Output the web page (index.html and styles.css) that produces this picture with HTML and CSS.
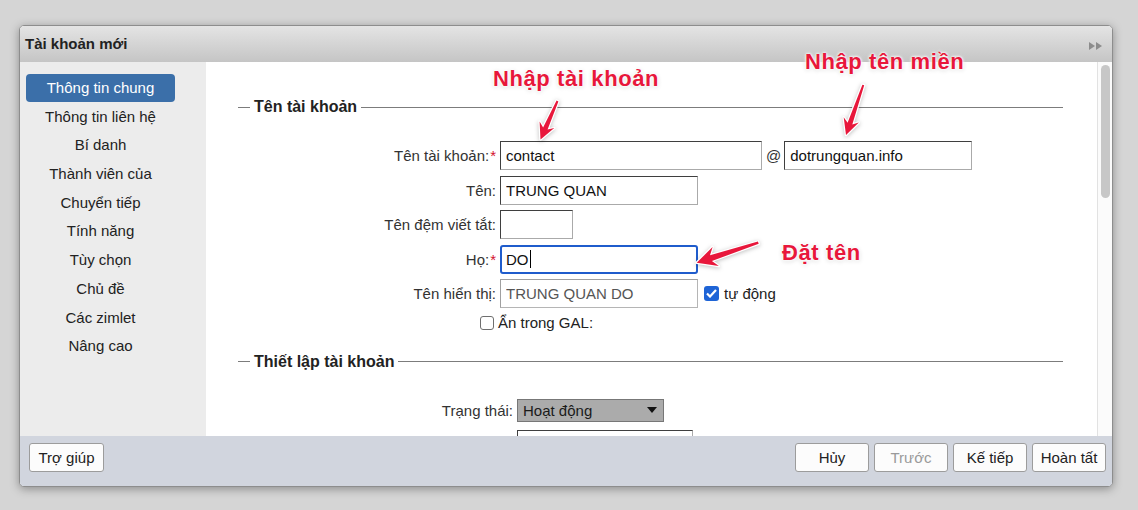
FILE: index.html
```html
<!DOCTYPE html>
<html lang="vi">
<head>
    <meta charset="UTF-8">
    <meta name="viewport" content="width=device-width, initial-scale=1.0">
    <title>Tài khoản mới</title>
    <link rel="stylesheet" href="styles.css">
</head>
<body>

    <div class="dialog">
        <div class="titlebar">
            <span class="title">Tài khoản mới</span>
            <svg class="expand" width="13" height="8" viewBox="0 0 13 8"><path d="M0 0L6 4L0 8Z M7 0L13 4L7 8Z" fill="#8c8c8c"/></svg>
        </div>

        <div class="body">
            <ul class="tabs">
                <li class="active">Thông tin chung</li>
                <li>Thông tin liên hệ</li>
                <li>Bí danh</li>
                <li>Thành viên của</li>
                <li>Chuyển tiếp</li>
                <li>Tính năng</li>
                <li>Tùy chọn</li>
                <li>Chủ đề</li>
                <li>Các zimlet</li>
                <li>Nâng cao</li>
            </ul>

            <div class="content">
                <!-- Tên tài khoản -->
                <div class="section">
                    <div class="section-head"><span>Tên tài khoản</span></div>
                    <div class="form form-name">
                        <label>Tên tài khoản:<em>*</em></label>
                        <div class="field">
                            <input class="w-account" type="text" value="contact">
                            <span class="at">@</span>
                            <input class="w-domain" type="text" value="dotrungquan.info">
                        </div>

                        <label>Tên:</label>
                        <div class="field"><input class="w-name" type="text" value="TRUNG QUAN"></div>

                        <label>Tên đệm viết tắt:</label>
                        <div class="field"><input class="w-initial" type="text" value=""></div>

                        <label>Họ:<em>*</em></label>
                        <div class="field"><div class="fake-input focused">DO<span class="caret"></span></div></div>

                        <label>Tên hiển thị:</label>
                        <div class="field">
                            <input class="w-name auto" type="text" value="TRUNG QUAN DO">
                            <span class="check on"><svg width="11" height="9" viewBox="0 0 11 9"><path d="M1 4.5L4 7.5L10 1" fill="none" stroke="#fff" stroke-width="2.2"/></svg></span>
                            <span class="check-text">tự động</span>
                        </div>

                        <label><span class="check"></span></label>
                        <div class="field gal">Ẩn trong GAL:</div>
                    </div>
                </div>

                <!-- Thiết lập tài khoản -->
                <div class="section second">
                    <div class="section-head"><span>Thiết lập tài khoản</span></div>
                    <div class="form form-setup">
                        <label>Trạng thái:</label>
                        <div class="field">
                            <div class="select">
                                <span>Hoạt động</span>
                                <svg width="10" height="6" viewBox="0 0 10 6"><path d="M0 0H10L5 6Z" fill="#111"/></svg>
                            </div>
                        </div>

                        <label></label>
                        <div class="field">
                            <input class="w-cos" type="text" value="">
                            <span class="check on"></span>
                        </div>
                    </div>
                </div>
            </div>

            <div class="scrollbar"><div class="thumb"></div></div>
        </div>

        <div class="footer">
            <button class="btn wide">Trợ giúp</button>
            <div class="btn-group">
                <button class="btn">Hủy</button>
                <button class="btn disabled">Trước</button>
                <button class="btn">Kế tiếp</button>
                <button class="btn">Hoàn tất</button>
            </div>
        </div>
    </div>

    <!-- Ghi chú chú thích -->
    <div class="notes">
        <svg class="arrows" width="1138" height="510" viewBox="0 0 1138 510">
            <path d="M558.4 101.4L547.6 129.5L554.3 128.1L540.5 139.5L539.6 121.6L543.1 127.5L556.6 100.6Z"/>
            <path d="M864.2 85.3L852.3 124.5L858.8 122.5L846 135L843.7 117.3L847.6 122.8L862.4 84.7Z"/>
            <path d="M758.7 243.8L711.9 260.9L718.8 266L696.7 262.7L712.6 247L710 255.2L757.9 241.6Z"/>
        </svg>
        <div class="note note-account">Nhập tài khoản</div>
        <div class="note note-domain">Nhập tên miền</div>
        <div class="note note-name">Đặt tên</div>
    </div>

</body>
</html>
```

FILE: styles.css
```css
* {
    box-sizing: border-box;
}

body {
    margin: 0;
    padding: 25px 0 0 19px;
    height: 510px;
    overflow: hidden;
    position: relative;
    background-color: #d5d5d5;
    font-family: "Liberation Sans", Arial, sans-serif;
    color: #222;
}

.dialog {
    width: 1094px;
    height: 462px;
    display: flex;
    flex-direction: column;
    border: 1px solid #8d8d8d;
    border-radius: 5px;
    overflow: hidden;
    background-color: #fff;
    box-shadow: 0 2px 10px rgba(0, 0, 0, 0.35);
}

.titlebar {
    flex: none;
    height: 36px;
    display: flex;
    align-items: center;
    justify-content: space-between;
    padding: 0 10px 2px 5px;
    background: linear-gradient(#e4e4e4, #c5c5c5);
}

.title {
    font-size: 15px;
    font-weight: bold;
    color: #222;
}

.expand {
    margin-top: 5px;
}

.body {
    flex: none;
    height: 374px;
    display: flex;
    overflow: hidden;
}

.tabs {
    flex: none;
    width: 186px;
    margin: 0;
    padding: 12px 0 0 6px;
    list-style: none;
    background-color: #ececec;
}

.tabs li {
    width: 149px;
    height: 28.7px;
    line-height: 28px;
    text-align: center;
    font-size: 15px;
    color: #222;
}

.tabs li.active {
    background-color: #3b6fa9;
    color: #fff;
    border-radius: 4px;
    height: 28px;
    margin-bottom: 0.7px;
}

.content {
    flex: 1;
    padding: 35px 34px 0 32px;
    overflow: hidden;
}

.section-head {
    height: 20px;
    display: flex;
    align-items: center;
    font-size: 16px;
    font-weight: bold;
    color: #222;
}

.section-head::before,
.section-head::after {
    content: "";
    height: 1px;
    background-color: #7c7c7c;
}

.section-head::before {
    width: 12px;
}

.section-head::after {
    flex: 1;
}

.section-head span {
    padding: 0 4px;
}

.form {
    display: grid;
    column-gap: 4px;
    row-gap: 5.5px;
    margin-top: 24px;
}

.form-name {
    grid-template-columns: 258px 1fr;
    grid-template-rows: repeat(5, 29px) 18px;
}

.form-setup {
    grid-template-columns: 275px 1fr;
    grid-auto-rows: 29px;
}

.section.second {
    margin-top: 20px;
}

label {
    display: flex;
    align-items: center;
    justify-content: flex-end;
    font-size: 15px;
    color: #333;
}

label em {
    font-style: normal;
    color: #d3112e;
    margin-left: 1px;
    align-self: flex-start;
    margin-top: 6px;
}

.field {
    display: flex;
    align-items: center;
    font-size: 15px;
    color: #333;
}

input[type="text"], .fake-input {
    height: 29px;
    margin: 0;
    padding: 0 5px;
    border: 1px solid;
    border-color: #3f3f3f #aaaaaa #aaaaaa #3f3f3f;
    background-color: #fff;
    font-family: inherit;
    font-size: 15px;
    color: #111;
    outline: none;
}

.w-account { width: 262px; }
.w-domain { width: 188px; }
.w-name { width: 198px; }
.w-initial { width: 73px; }
.w-cos { width: 176px; }

input.auto {
    border-color: #a0a0a0 #b5b5b5 #b5b5b5 #a0a0a0;
    color: #555;
}

.at {
    margin: 0 3px 0 4px;
    font-size: 15px;
    color: #333;
}

.fake-input {
    width: 198px;
    display: flex;
    align-items: center;
}

.fake-input.focused {
    border: 2px solid #1f5ccc;
    border-radius: 3px;
    padding: 0 4px;
}

.caret {
    display: inline-block;
    width: 1px;
    height: 18px;
    margin-left: 1px;
    background-color: #000;
}

.check {
    display: inline-flex;
    align-items: center;
    justify-content: center;
    width: 14px;
    height: 14px;
    margin-right: 2px;
    border: 1px solid #6f6f6f;
    border-radius: 3px;
    background-color: #fff;
}

.check.on {
    width: 15px;
    height: 15px;
    margin: 0 5px 0 6px;
    border: none;
    background-color: #1e64d6;
}

.check-text {
    font-size: 15px;
    color: #222;
}

.field.gal {
    margin-left: -2px;
    color: #222;
}

.select {
    width: 147px;
    height: 23px;
    display: flex;
    align-items: center;
    justify-content: space-between;
    padding: 0 6px 0 5px;
    border: 1px solid #777;
    background-color: #ababab;
    font-size: 15px;
    color: #1a1a1a;
}

.scrollbar {
    flex: none;
    width: 15px;
    padding: 3px 0 0 3px;
    border-left: 1px solid #e2e2e2;
    background-color: #fbfbfb;
}

.thumb {
    width: 9px;
    height: 133px;
    border-radius: 5px;
    background-color: #c7c7c7;
}

.footer {
    flex: 1;
    display: flex;
    align-items: flex-start;
    justify-content: space-between;
    padding: 7px 6px 0 9px;
    background-color: #d1d5de;
}

.btn-group {
    display: flex;
    gap: 5px;
}

.btn {
    width: 74px;
    height: 29px;
    padding: 0;
    border: 1px solid #9c9c9c;
    border-radius: 3px;
    background-color: #fcfcfc;
    font-family: inherit;
    font-size: 15px;
    color: #222;
}

.btn.wide {
    width: 75px;
}

.btn.disabled {
    color: #9a9a9a;
}

/* Chú thích màu đỏ */
.notes {
    position: absolute;
    top: 0;
    left: 0;
    width: 1138px;
    height: 510px;
    pointer-events: none;
}

.arrows {
    position: absolute;
    top: 0;
    left: 0;
    filter: drop-shadow(0 1px 2px rgba(0, 0, 0, 0.25));
}

.arrows path {
    fill: #e8173b;
    stroke: #fff;
    stroke-width: 2.5;
    stroke-linejoin: round;
    paint-order: stroke;
}

.note {
    position: absolute;
    font-size: 22px;
    line-height: 22px;
    font-weight: bold;
    letter-spacing: 0.6px;
    color: #e8173b;
    white-space: nowrap;
    text-shadow: 0 0 2px #fff, 0 0 3px #fff, 0 0 4px #fff, 0 1px 5px rgba(0, 0, 0, 0.2);
}

.note-account {
    left: 493px;
    top: 68px;
}

.note-domain {
    left: 805px;
    top: 51px;
}

.note-name {
    left: 782px;
    top: 242px;
}
```
